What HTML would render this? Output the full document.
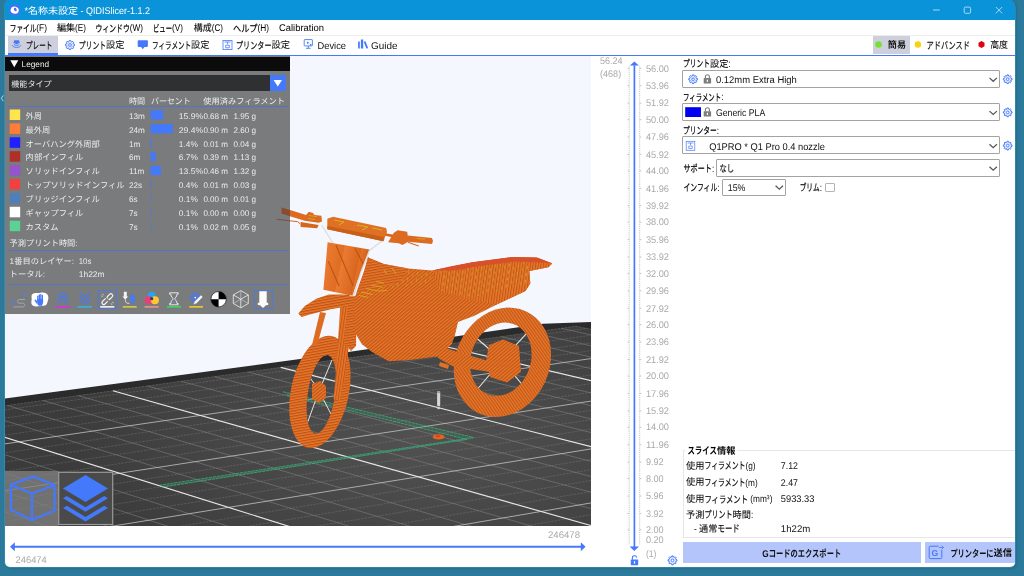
<!DOCTYPE html>
<html lang="ja"><head><meta charset="utf-8"><title>*名称未設定 - QIDISlicer-1.1.2</title>
<style>
html,body{margin:0;padding:0}
body{width:1024px;height:576px;overflow:hidden;background:#2c7a9b;position:relative;font-family:"Liberation Sans","Noto Sans CJK JP",sans-serif;}
.abs{position:absolute}
#win{position:absolute;left:5px;top:0;width:1010.4px;height:566.700px;background:linear-gradient(#0a93d9 0,#0a93d9 19px,#fff 19px);border-radius:5px 7px 5px 5px;overflow:hidden;box-shadow:0 0 0 .5px #3a9acb,1.500px 1px 2.500px .3px rgba(20,60,80,.22)}
#titlebar{position:absolute;left:0;top:0;width:100%;height:20px;background:#0a93d9}
#menubar{position:absolute;left:0;top:20px;width:100%;height:14.5px;background:#fff;border-bottom:1px solid #ececec}
#tabbar{position:absolute;left:0;top:35.5px;width:100%;height:19px;background:#fff;border-bottom:1.3px solid #4479fb}
.seltab{position:absolute;background:#cdd0dc}
#view{position:absolute;left:0;top:56px;width:585.6px;height:470px;background:#f4f7fe;overflow:hidden}
#legend{position:absolute;left:0;top:0;width:285px;height:257.6px;background:#797b7d}
#legend .hd{position:absolute;left:0;top:.6px;width:100%;height:14.2px;background:#0b0b0b}
#legend .cb{position:absolute;left:4px;top:19.3px;width:261px;height:15.7px;background:#2e3031}
#legend .cbb{position:absolute;left:265px;top:19.3px;width:15.6px;height:15.7px;background:#4479fb}
.hl{position:absolute;height:1.100px;background:#5a72bd}
#sb{position:absolute;left:677px;top:56px;width:333px;height:510px;background:#fff}
.combo{position:absolute;border:.9px solid #a3a3a3;background:#fff;box-sizing:border-box;border-radius:1px}
.btn{position:absolute;background:#b4c5fb}
#grp{position:absolute;left:.7px;top:394px;width:340px;height:87.5px;border:1px solid #e6e6e6;box-sizing:border-box}
svg{position:absolute;left:0;top:0;overflow:visible}
#ov{will-change:transform}
text{font-family:"Liberation Sans","Noto Sans CJK JP",sans-serif;white-space:pre;text-rendering:geometricPrecision}
</style></head><body>
<div id="win">
 <div id="titlebar"></div>
 <div id="menubar"></div>
 <div id="tabbar"><div class="seltab" style="left:3px;top:.5px;width:50px;height:17.5px"></div><div class="abs" style="left:3px;top:17.5px;width:50px;height:2.2px;background:#4479fb"></div><div class="seltab" style="left:868px;top:.5px;width:37px;height:17.5px"></div></div>
 <div id="view">
  <svg width="585.6" height="470" viewBox="5 56 585.6 470" style="overflow:hidden">
<defs>
<radialGradient id="bedg" gradientUnits="userSpaceOnUse" cx="420" cy="440" r="360" gradientTransform="translate(420 440) scale(1 .45) translate(-420 -440)"><stop offset="0" stop-color="#515151"/><stop offset=".45" stop-color="#484848"/><stop offset="1" stop-color="#3b3b3b"/></radialGradient>
<pattern id="hat" width="2.6" height="2.6" patternUnits="userSpaceOnUse" patternTransform="rotate(50)"><rect width="2.6" height="2.6" fill="#ea7630"/><rect width="1.2" height="2.6" fill="#bd5711"/></pattern>
<pattern id="hat2" width="2.5" height="2.5" patternUnits="userSpaceOnUse" patternTransform="rotate(-35)"><rect width="2.5" height="2.5" fill="#ea7630"/><rect width="1.15" height="2.5" fill="#bf5912"/></pattern>
<pattern id="hat3" width="2.6" height="2.6" patternUnits="userSpaceOnUse" patternTransform="rotate(80)"><rect width="2.6" height="2.6" fill="#ea7630"/><rect width="1.2" height="2.6" fill="#bb5510"/></pattern>
<pattern id="hat4" width="2.6" height="2.6" patternUnits="userSpaceOnUse" patternTransform="rotate(8)"><rect width="2.6" height="2.6" fill="#e9752e"/><rect width="1.1" height="2.6" fill="#c05a13"/></pattern>
<pattern id="oliv" width="9" height="7" patternUnits="userSpaceOnUse" patternTransform="rotate(8)"><rect x="1" y="1" width=".9" height="3.200" fill="#c9a425"/><rect x="5.500" y="4" width=".9" height="2.600" fill="#c9a425"/></pattern>
</defs>
<polygon points="0,399.2 5,398.500 300,359 543,323.800 591,322 591,330 0,410" fill="#2b2b2b"/>
<polygon points="0,406.2 575.8,326.2 591,328.5 591,530 0,530" fill="#3d3d3d"/>
<polygon points="-291.5,447.2 575.8,326.2 1181.0,457.4 219.7,632.0" fill="url(#bedg)"/>
<path d="M-214.1 436.4L308.0 616.0M-176.1 431.1L351.2 608.1M-138.5 425.8L393.7 600.4M-101.3 420.7L435.7 592.8M-28.3 410.5L517.8 577.9M7.6 405.5L558.0 570.6M43.1 400.5L597.7 563.4M78.2 395.6L636.8 556.3M147.2 386.0L713.4 542.4M181.1 381.3L751.0 535.5M214.7 376.6L788.0 528.8M247.9 372.0L824.6 522.2M313.2 362.8L896.3 509.2M345.3 358.4L931.4 502.8M377.1 353.9L966.1 496.5M408.6 349.5L1000.3 490.3M470.5 340.9L1067.5 478.1M501.0 336.7L1100.4 472.1M531.1 332.5L1133.0 466.2M561.0 328.3L1165.1 460.3" stroke="#858585" stroke-width=".55" fill="none"/>
<path d="M575.8 326.2L1181.0 457.4M-291.5 447.2L575.8 326.2M-283.1 450.2L586.1 328.5M-266.0 456.4L606.9 333.0M-248.6 462.7L628.1 337.6M-230.9 469.1L649.5 342.2M-194.7 482.2L693.3 351.7M-176.2 488.9L715.6 356.5M-157.3 495.7L738.3 361.5M-138.1 502.6L761.3 366.5M-98.8 516.9L808.4 376.7M-78.6 524.2L832.4 381.9M-58.1 531.6L856.8 387.2M-37.2 539.1L881.6 392.5M5.8 554.7L932.3 403.5M27.8 562.6L958.2 409.1M50.3 570.7L984.5 414.8M73.1 579.0L1011.3 420.6M120.2 596.0L1066.1 432.5M144.4 604.8L1094.1 438.6M169.0 613.7L1122.6 444.8M194.1 622.8L1151.6 451.1" stroke="#9a9a9a" stroke-width=".5" stroke-dasharray="2.4 1.1" fill="none" opacity=".55"/>
<path d="M-213.0 475.6L671.2 346.9M-118.6 509.7L784.7 371.5M-15.9 546.8L906.7 398.0M96.4 587.4L1038.5 426.5M219.7 632.0L1181.0 457.4" stroke="#c4c4c4" stroke-width=".8" fill="none"/>
<path d="M-252.6 441.7L264.2 623.9M-64.6 415.5L477.0 585.3M112.9 390.8L675.4 549.3M280.7 367.4L860.7 515.6M439.7 345.2L1034.1 484.1" stroke="#e6e6e6" stroke-width="1.15" fill="none"/>
<path d="M283 391.800L473.500 437.500L159.600 485.200 M287 395.200L467.100 439.400L163 487" stroke="#3bc487" stroke-width=".75" stroke-dasharray="3.200 .7" fill="none" opacity=".9"/>
<path d="M285 393.500L470.300 438.500L161 486.100" stroke="#2a8f64" stroke-width="1.600" fill="none" opacity=".35"/>
<g id="bike"><path d="M502 360L474 336M502 360L529 331M502 360L475 392M502 360L525 388" stroke="#e4e4e4" stroke-width="1.100" fill="none"/>
<path d="M545.1 381.9L541.7 388.4L537.6 394.4L532.9 399.9L527.7 404.8L522.1 408.9L516.1 412.3L509.9 414.8L503.5 416.3L497.1 417.0L490.9 416.7L484.8 415.5L479.0 413.4L473.6 410.4L468.7 406.6L464.4 402.0L460.8 396.8L457.8 390.9L455.6 384.6L454.3 377.9L453.7 370.9L454.0 363.8L455.1 356.6L457.0 349.6L459.7 342.7L463.1 336.2L467.2 330.2L471.9 324.7L477.1 319.8L482.7 315.7L488.7 312.3L494.9 309.8L501.3 308.3L507.7 307.6L513.9 307.9L520.0 309.1L525.8 311.2L531.2 314.2L536.1 318.0L540.4 322.6L544.0 327.8L547.0 333.7L549.2 340.0L550.5 346.7L551.1 353.7L550.8 360.8L549.7 368.0L547.8 375.0ZM529.0 369.1L527.1 373.7L524.8 377.9L522.1 381.9L519.0 385.4L515.6 388.6L512.0 391.2L508.1 393.2L504.1 394.7L500.1 395.6L496.1 395.8L492.2 395.5L488.4 394.5L484.8 392.9L481.5 390.7L478.5 388.0L475.9 384.8L473.8 381.1L472.1 377.1L470.9 372.8L470.2 368.2L470.0 363.5L470.3 358.7L471.2 354.0L472.6 349.3L474.5 344.7L476.8 340.5L479.5 336.5L482.6 333.0L486.0 329.8L489.6 327.2L493.5 325.2L497.5 323.7L501.5 322.8L505.5 322.6L509.4 322.9L513.2 323.9L516.8 325.5L520.1 327.7L523.1 330.4L525.7 333.6L527.8 337.3L529.5 341.3L530.7 345.6L531.4 350.2L531.6 354.9L531.3 359.7L530.4 364.4Z" fill="url(#hat2)" fill-rule="evenodd"/>
<polygon points="489.0,345.0 503.0,339.5 519.0,346.0 521.0,372.0 507.0,382.5 490.0,377.0 486.0,361.0" fill="url(#hat)"/>
<polygon points="440.0,346.0 458.0,352.0 492.0,362.0 490.0,372.0 452.0,366.0 438.0,358.0" fill="url(#hat)"/>
<polygon points="440.0,362.0 449.0,365.0 448.0,369.0 439.0,366.0" fill="#e27128"/>
<path d="M319 391L332 360M319 391L309 376M319 391L307 424M319 391L331 414" stroke="#e4e4e4" stroke-width="1" fill="none"/>
<path d="M348.2 398.0L346.4 405.2L344.1 412.2L341.4 418.9L338.4 425.1L335.0 430.7L331.4 435.7L327.6 439.9L323.7 443.3L319.7 445.8L315.7 447.4L311.7 448.0L307.9 447.7L304.3 446.5L301.0 444.3L298.0 441.2L295.4 437.2L293.2 432.5L291.5 427.1L290.2 421.1L289.4 414.6L289.2 407.7L289.5 400.5L290.3 393.2L291.6 385.8L293.4 378.6L295.7 371.6L298.4 364.9L301.4 358.7L304.8 353.1L308.4 348.1L312.2 343.9L316.1 340.5L320.1 338.0L324.1 336.4L328.1 335.8L331.9 336.1L335.5 337.3L338.8 339.5L341.8 342.6L344.4 346.6L346.6 351.3L348.3 356.7L349.6 362.7L350.4 369.2L350.6 376.1L350.3 383.3L349.5 390.6ZM334.8 396.4L333.9 401.5L332.8 406.5L331.5 411.3L330.0 415.7L328.3 419.8L326.6 423.5L324.7 426.7L322.8 429.3L320.9 431.3L318.9 432.7L317.1 433.5L315.3 433.5L313.6 432.9L312.0 431.6L310.6 429.7L309.4 427.2L308.3 424.1L307.6 420.5L307.0 416.5L306.7 412.1L306.6 407.4L306.8 402.4L307.3 397.3L308.0 392.2L308.9 387.1L310.0 382.1L311.3 377.3L312.8 372.9L314.5 368.8L316.2 365.1L318.1 361.9L320.0 359.3L321.9 357.3L323.9 355.9L325.7 355.1L327.5 355.1L329.2 355.7L330.8 357.0L332.2 358.9L333.4 361.4L334.5 364.5L335.2 368.1L335.8 372.1L336.1 376.5L336.2 381.2L336.0 386.2L335.5 391.3Z" fill="url(#hat3)" fill-rule="evenodd"/>
<polygon points="312.0,384.0 320.0,381.0 326.0,386.0 326.0,398.0 319.0,403.0 312.0,399.0" fill="url(#hat)"/>
<polygon points="341.0,296.0 353.0,296.5 349.6,340.0 345.0,378.0 339.5,401.0 333.5,399.0 336.0,372.0 338.0,340.0" fill="url(#hat4)"/>
<polygon points="320.0,312.0 326.0,313.0 317.0,346.0 312.0,345.0" fill="#dd6c22"/>
<polygon points="298.3,313.5 304.8,306.0 316.3,298.8 328.8,294.6 349.7,294.6 348.5,306.0 330.8,309.2 322.5,311.3 310.0,314.5 301.5,317.0" fill="url(#hat3)"/>
<polygon points="349.0,296.5 357.0,296.0 356.0,346.0 351.0,351.0 343.5,342.0" fill="url(#hat3)"/>
<polygon points="369.2,258.0 383.8,264.0 408.0,268.5 432.4,270.5 450.0,267.0 472.0,262.5 512.1,257.3 537.0,257.7 552.2,263.4 548.4,267.2 529.3,271.0 530.3,283.5 525.5,291.0 496.8,304.5 473.9,316.0 458.0,322.0 455.0,335.0 451.8,344.2 437.2,356.4 410.0,360.0 388.6,361.3 372.0,352.0 361.9,344.2 354.6,332.0 354.6,303.0 355.0,297.0 359.0,285.0 364.0,271.5 368.0,256.5" fill="url(#hat)"/>
<polygon points="432.4,270.5 450.0,267.0 472.0,262.5 512.1,257.3 537.0,257.7 552.2,263.4 548.4,267.2 529.3,271.0 530.3,283.5 525.5,291.0 496.8,304.5 470.0,300.0 440.0,292.0" fill="url(#hat4)"/>
<polygon points="440.0,268.0 530.0,262.0 528.0,284.0 470.0,298.0 440.0,290.0" fill="url(#oliv)"/>
<polygon points="372.0,262.0 432.0,272.0 430.0,284.0 372.0,290.0" fill="url(#oliv)" opacity=".8"/>
<polygon points="432.4,270.5 450.0,266.5 472.0,262.3 512.1,257.1 537.0,257.5 552.2,263.2 540.0,262.5 515.0,261.5 480.0,266.0 455.0,270.5" fill="#d8502a"/>
<polygon points="369.2,258.0 383.8,264.0 408.0,268.5 400.0,282.0 372.0,290.0 357.0,292.0 364.0,271.5" fill="url(#hat3)" opacity=".9"/>
<linearGradient id="plg" x1="0" y1="0" x2="1" y2=".25"><stop offset="0" stop-color="#ee7c33"/><stop offset=".45" stop-color="#e06d24"/><stop offset=".46" stop-color="#ec7a31"/><stop offset=".8" stop-color="#d9661f"/><stop offset=".81" stop-color="#e47128"/><stop offset="1" stop-color="#cf5f1a"/></linearGradient>
<polygon points="327.6,242.3 369.5,249.6 363.4,265.4 357.0,282.0 352.5,295.7 323.4,289.7" fill="url(#plg)"/>
<path d="M336.100 245.300L353.100 286 M355 248.400L363.400 264.200 M328.200 261.100L339.100 286" stroke="#b9540f" stroke-width="1.100" fill="none"/>
<path d="M321.600 225 L333 243 M384.700 239 L369.500 250.500 L361 272 L353.700 295.700" stroke="#dcdcdc" stroke-width="1.300" fill="none"/>
<path d="M376 281.500l8 1.600M371 285l12 2.400M366 288.500l13 2.600l8-.8M361 292l12 2.600M359 295.500l9 1.800M384 270l3 4M392 268l4 6" stroke="#d9b01f" stroke-width=".8" fill="none"/>
<polygon points="290.0,210.0 306.1,215.1 308.9,211.7 313.0,213.0 314.4,215.1 321.4,215.8 322.0,221.4 318.6,222.8 304.7,220.7 290.0,216.3" fill="#dc6b21"/>
<polygon points="300.6,222.1 318.6,224.9 317.2,228.3 300.6,226.9" fill="#d5661e"/>
<path d="M290 220.8L297.800 221.700L300.600 224.200" stroke="#d5661e" stroke-width="1" fill="none"/>
<path d="M309 215.500l8 1.200M308 218.500l7 1" stroke="#d8b020" stroke-width=".8" fill="none"/>
<polygon points="327.3,218.7 333.1,216.8 386.2,227.9 387.0,232.0 383.4,241.3 327.3,229.2" fill="#e07026"/>
<polygon points="327.3,226.0 383.8,237.0 383.4,241.3 327.3,229.2" fill="#c65f18"/>
<path d="M334 220 L344 222 L339 225 M357 225 L368 227 L362 230 M372 228 L382 230" stroke="#d8b020" stroke-width="1" fill="none"/>
<path d="M385.300 234.500L395 236.400" stroke="#d5661e" stroke-width="2.600"/>
<polygon points="393.9,232.7 397.7,230.3 407.2,231.7 407.7,235.5 432.0,238.0 433.0,241.0 432.0,244.1 408.2,241.8 402.5,245.1 398.6,243.2 388.1,242.2" fill="#dc6b21"/>
<path d="M408 242.200L418.700 246" stroke="#d5661e" stroke-width="1.100"/><path d="M417 238.500l8 .6" stroke="#d8b020" stroke-width=".8"/></g>
<rect x="437.100" y="391" width="3.100" height="15.200" rx="1" fill="#d6d6d6"/><rect x="437.100" y="391" width="3.100" height="2.200" rx="1" fill="#9c9c9c"/><rect x="437.300" y="407.300" width="2.700" height="1.800" fill="#cfcfcf"/>
<ellipse cx="438.600" cy="436.900" rx="6" ry="2.700" fill="#e0661f"/><ellipse cx="438" cy="436.200" rx="2.200" ry="1" fill="#e03a25"/>
</svg>
  <div id="legend"><div class="hd"></div><div class="cb"></div><div class="cbb"></div>
   <div class="hl" style="left:2.500px;top:50.200px;width:280.500px"></div>
   <div class="hl" style="left:2.500px;top:193.600px;width:280.500px"></div>
   <div class="hl" style="left:2.500px;top:228.400px;width:280.500px"></div>
  </div>
 </div>
 <div id="sb">
  <div class="combo" style="left:.3px;top:14.100px;width:317.500px;height:17.900px"></div>
  <div class="combo" style="left:.3px;top:47.300px;width:317.500px;height:17.900px"></div>
  <div class="combo" style="left:.3px;top:80.400px;width:317.500px;height:17.900px"></div>
  <div class="combo" style="left:34.3px;top:103.4px;width:283.5px;height:17.2px"></div>
  <div class="combo" style="left:40px;top:122.5px;width:63.6px;height:17.2px"></div>
  <div class="combo" style="left:143.4px;top:126.8px;width:9.2px;height:9.2px;border-color:#b5b5b5"></div>
  <div id="grp"></div>
  <div class="btn" style="left:.6px;top:486.3px;width:238.5px;height:20.4px"></div>
  <div class="btn" style="left:243.2px;top:486.3px;width:91px;height:20.4px"></div>
 </div>
</div>
<svg id="ov" width="1024" height="576" viewBox="0 0 1024 576">
<rect x="9.800" y="5.100" width="9.800" height="9.800" rx="1.800" fill="#4b6df5"/><ellipse cx="14.700" cy="10.200" rx="4.100" ry="3.500" fill="#fff" transform="rotate(15 14.700 10.200)"/><ellipse cx="15.300" cy="9.500" rx="1.300" ry="1.900" fill="#4b6df5" transform="rotate(-25 15.300 9.500)"/>
<text fill="#fff"><tspan x="24.4" y="14.0" font-size="9.8" textLength="3.5" lengthAdjust="spacingAndGlyphs">*</tspan><tspan x="27.9" y="13.9" font-size="9.4" textLength="50.1" lengthAdjust="spacingAndGlyphs">名称未設定</tspan><tspan x="78.0" y="14.0" font-size="9.8" textLength="72.0" lengthAdjust="spacingAndGlyphs"> - QIDISlicer-1.1.2</tspan></text>
<g stroke="#cfeafa" stroke-width=".8" fill="none"><path d="M933 10H939.8"/><rect x="964.2" y="7.1" width="6.4" height="6.2" rx="1.2"/><path d="M995.8 7L1002.2 13.4M1002.2 7L995.8 13.4"/></g>
<text fill="#000"><tspan x="9.8" y="31.7" font-size="9.8" textLength="26.6" lengthAdjust="spacingAndGlyphs" stroke="#000" stroke-width="0.2">ファイル</tspan><tspan x="36.3" y="31.4" font-size="9.8" textLength="10.6" lengthAdjust="spacingAndGlyphs">(F)</tspan></text>
<text fill="#000"><tspan x="56.9" y="31.3" font-size="9.4" textLength="18.2" lengthAdjust="spacingAndGlyphs" stroke="#000" stroke-width="0.08">編集</tspan><tspan x="75.1" y="31.4" font-size="9.8" textLength="10.9" lengthAdjust="spacingAndGlyphs">(E)</tspan></text>
<text fill="#000"><tspan x="95.6" y="31.7" font-size="9.8" textLength="34.1" lengthAdjust="spacingAndGlyphs" stroke="#000" stroke-width="0.2">ウィンドウ</tspan><tspan x="129.7" y="31.4" font-size="9.8" textLength="13.3" lengthAdjust="spacingAndGlyphs">(W)</tspan></text>
<text fill="#000"><tspan x="153.0" y="31.7" font-size="9.8" textLength="19.0" lengthAdjust="spacingAndGlyphs" stroke="#000" stroke-width="0.2">ビュー</tspan><tspan x="172.0" y="31.4" font-size="9.8" textLength="11.0" lengthAdjust="spacingAndGlyphs">(V)</tspan></text>
<text fill="#000"><tspan x="193.8" y="31.3" font-size="9.4" textLength="18.0" lengthAdjust="spacingAndGlyphs" stroke="#000" stroke-width="0.08">構成</tspan><tspan x="211.8" y="31.4" font-size="9.8" textLength="11.2" lengthAdjust="spacingAndGlyphs">(C)</tspan></text>
<text fill="#000"><tspan x="233.0" y="31.7" font-size="9.8" textLength="24.5" lengthAdjust="spacingAndGlyphs" stroke="#000" stroke-width="0.2">ヘルプ</tspan><tspan x="257.5" y="31.4" font-size="9.8" textLength="11.5" lengthAdjust="spacingAndGlyphs">(H)</tspan></text>
<text fill="#000"><tspan x="279.0" y="31.4" font-size="9.8" textLength="45.0" lengthAdjust="spacingAndGlyphs">Calibration</tspan></text>
<text fill="#111"><tspan x="26.0" y="48.8" font-size="9.8" textLength="26.3" lengthAdjust="spacingAndGlyphs" stroke="#111" stroke-width="0.2">プレート</tspan></text>
<text fill="#111"><tspan x="78.8" y="48.8" font-size="9.8" textLength="27.3" lengthAdjust="spacingAndGlyphs" stroke="#111" stroke-width="0.2">プリント</tspan><tspan x="106.1" y="48.4" font-size="9.4" textLength="18.4" lengthAdjust="spacingAndGlyphs" stroke="#111" stroke-width="0.08">設定</tspan></text>
<text fill="#111"><tspan x="152.0" y="48.8" font-size="9.8" textLength="39.1" lengthAdjust="spacingAndGlyphs" stroke="#111" stroke-width="0.2">フィラメント</tspan><tspan x="191.1" y="48.4" font-size="9.4" textLength="18.4" lengthAdjust="spacingAndGlyphs" stroke="#111" stroke-width="0.08">設定</tspan></text>
<text fill="#111"><tspan x="236.0" y="48.8" font-size="9.8" textLength="35.6" lengthAdjust="spacingAndGlyphs" stroke="#111" stroke-width="0.2">プリンター</tspan><tspan x="271.6" y="48.4" font-size="9.4" textLength="18.4" lengthAdjust="spacingAndGlyphs" stroke="#111" stroke-width="0.08">設定</tspan></text>
<text fill="#111"><tspan x="317.5" y="48.5" font-size="9.8" textLength="28.5" lengthAdjust="spacingAndGlyphs">Device</tspan></text>
<text fill="#111"><tspan x="371.0" y="48.5" font-size="9.8" textLength="26.5" lengthAdjust="spacingAndGlyphs">Guide</tspan></text>
<g fill="none" stroke="#4479fb" stroke-width=".9"><path d="M12.2 45.2c1 3 7.8 3 8.8 0"/><path d="M13.8 44.2c1 1.6 4.6 1.6 5.6 0"/></g><path d="M14.3 40.2h4.6l.9 2.6-3.2 1.5-3.2-1.5z" fill="#4479fb"/>
<path d="M73.47 44.08L74.55 44.31L74.55 45.69L73.47 45.92L73.10 46.80L73.70 47.73L72.73 48.70L71.80 48.10L70.92 48.47L70.69 49.55L69.31 49.55L69.08 48.47L68.20 48.10L67.27 48.70L66.30 47.73L66.90 46.80L66.53 45.92L65.45 45.69L65.45 44.31L66.53 44.08L66.90 43.20L66.30 42.27L67.27 41.30L68.20 41.90L69.08 41.53L69.31 40.45L70.69 40.45L70.92 41.53L71.80 41.90L72.73 41.30L73.70 42.27L73.10 43.20Z" fill="#4479fb" fill-opacity=".18" stroke="#4479fb" stroke-width="1.0" stroke-linejoin="round"/><circle cx="70" cy="45" r="1.38" fill="#fff" stroke="#4479fb" stroke-width="0.90"/>
<path d="M138.5 40.3h8.6a.8 .8 0 0 1 .8 .8v5a.8 .8 0 0 1 -.8 .8h-2.6l-1.7 2.3-1.7-2.3h-2.6a.8 .8 0 0 1 -.8-.8v-5a.8 .8 0 0 1 .8-.8z" fill="#4479fb"/>
<g fill="none" stroke="#4479fb" stroke-width=".8"><rect x="223" y="40.4" width="9" height="9.2"/><path d="M224.5 42h6M227.5 42v2.2M225.7 47.8v-2.6h3.6v2.6z"/></g>
<g fill="none" stroke="#4479fb" stroke-width=".9"><rect x="304.2" y="39.600" width="8.200" height="6.300" rx=".5"/><path d="M306 48.300h4.600M308.300 46v2.200"/></g><circle cx="307.800" cy="42.700" r="1" fill="#4479fb"/><path d="M309.600 43.600l2.600 1.300-1.100 .4-.4 1.100z" fill="#4479fb"/>
<g fill="#4479fb"><rect x="358.100" y="41.500" width="1.700" height="7"/><rect x="360.900" y="39.500" width="2.300" height="9"/><path d="M363.800 41.700l1.700-.5 2.700 7-1.900 .4z"/></g>
<circle cx="878.5" cy="44.5" r="3.3" fill="#76e033"/>
<text fill="#111" font-weight="bold"><tspan x="887.8" y="48.1" font-size="9.4" textLength="18.2" lengthAdjust="spacingAndGlyphs">簡易</tspan></text>
<circle cx="917.9" cy="44.5" r="3.2" fill="#f8d410"/>
<text fill="#111"><tspan x="926.5" y="48.5" font-size="9.8" textLength="43.5" lengthAdjust="spacingAndGlyphs" stroke="#111" stroke-width="0.2">アドバンスド</tspan></text>
<polygon points="981.5,41 984.5,42.7 984.5,46.3 981.5,48 978.5,46.3 978.5,42.7" fill="#e3000f"/>
<text fill="#111"><tspan x="990.2" y="48.1" font-size="9.4" textLength="17.8" lengthAdjust="spacingAndGlyphs" stroke="#111" stroke-width="0.08">高度</tspan></text>
<polygon points="10.3,60.2 18.3,60.2 14.3,67.3" fill="#fff"/>
<text x="21.6" y="67.2" font-size="8.3" fill="#ececec" textLength="27.5" lengthAdjust="spacingAndGlyphs">Legend</text>
<text x="11.3" y="86.8" font-size="8.2" fill="#ececec" textLength="40.3" lengthAdjust="spacingAndGlyphs">機能タイプ</text>
<polygon points="273.6,80 282,80 277.8,86.6" fill="#fff"/>
<text x="129.0" y="103.8" font-size="8.2" fill="#ececec" textLength="16.2" lengthAdjust="spacingAndGlyphs">時間</text>
<text x="151.0" y="103.8" font-size="8.2" fill="#ececec" textLength="39.8" lengthAdjust="spacingAndGlyphs">パーセント</text>
<text x="203.3" y="103.8" font-size="8.2" fill="#ececec" textLength="81.7" lengthAdjust="spacingAndGlyphs">使用済みフィラメント</text>
<rect x="9.7" y="109.5" width="10.5" height="10.5" fill="#ffe54d"/>
<text x="25.6" y="118.7" font-size="8.2" fill="#ececec" textLength="16.5" lengthAdjust="spacingAndGlyphs">外周</text>
<text x="129.0" y="118.7" font-size="8.2" fill="#ececec">13m</text>
<rect x="150.6" y="110.2" width="12.4" height="9.3" fill="#4479fb"/>
<text x="178.8" y="118.7" font-size="8.2" fill="#ececec" textLength="24.4" lengthAdjust="spacingAndGlyphs">15.9%</text>
<text x="203.4" y="118.7" font-size="8.2" fill="#ececec" textLength="24.6" lengthAdjust="spacingAndGlyphs">0.68 m</text>
<text x="233.4" y="118.7" font-size="8.2" fill="#ececec" textLength="22.6" lengthAdjust="spacingAndGlyphs">1.95 g</text>
<rect x="9.7" y="123.4" width="10.5" height="10.5" fill="#ff7d38"/>
<text x="25.6" y="132.6" font-size="8.2" fill="#ececec" textLength="24.8" lengthAdjust="spacingAndGlyphs">最外周</text>
<text x="129.0" y="132.6" font-size="8.2" fill="#ececec">24m</text>
<rect x="150.6" y="124.1" width="22.2" height="9.3" fill="#4479fb"/>
<text x="178.8" y="132.6" font-size="8.2" fill="#ececec" textLength="24.4" lengthAdjust="spacingAndGlyphs">29.4%</text>
<text x="203.4" y="132.6" font-size="8.2" fill="#ececec" textLength="24.6" lengthAdjust="spacingAndGlyphs">0.90 m</text>
<text x="233.4" y="132.6" font-size="8.2" fill="#ececec" textLength="22.6" lengthAdjust="spacingAndGlyphs">2.60 g</text>
<rect x="9.7" y="137.3" width="10.5" height="10.5" fill="#1f1fff"/>
<text x="25.6" y="146.5" font-size="8.2" fill="#ececec" textLength="74.2" lengthAdjust="spacingAndGlyphs">オーバハング外周部</text>
<text x="129.0" y="146.5" font-size="8.2" fill="#ececec">1m</text>
<rect x="150.6" y="138.0" width="1.1" height="9.3" fill="#4479fb"/>
<text x="178.8" y="146.5" font-size="8.2" fill="#ececec" textLength="19.0" lengthAdjust="spacingAndGlyphs">1.4%</text>
<text x="203.4" y="146.5" font-size="8.2" fill="#ececec" textLength="24.6" lengthAdjust="spacingAndGlyphs">0.01 m</text>
<text x="233.4" y="146.5" font-size="8.2" fill="#ececec" textLength="22.6" lengthAdjust="spacingAndGlyphs">0.04 g</text>
<rect x="9.7" y="151.2" width="10.5" height="10.5" fill="#b03029"/>
<text x="25.6" y="160.4" font-size="8.2" fill="#ececec" textLength="57.8" lengthAdjust="spacingAndGlyphs">内部インフィル</text>
<text x="129.0" y="160.4" font-size="8.2" fill="#ececec">6m</text>
<rect x="150.6" y="151.9" width="5.1" height="9.3" fill="#4479fb"/>
<text x="178.8" y="160.4" font-size="8.2" fill="#ececec" textLength="19.0" lengthAdjust="spacingAndGlyphs">6.7%</text>
<text x="203.4" y="160.4" font-size="8.2" fill="#ececec" textLength="24.6" lengthAdjust="spacingAndGlyphs">0.39 m</text>
<text x="233.4" y="160.4" font-size="8.2" fill="#ececec" textLength="22.6" lengthAdjust="spacingAndGlyphs">1.13 g</text>
<rect x="9.7" y="165.1" width="10.5" height="10.5" fill="#9654cc"/>
<text x="25.6" y="174.3" font-size="8.2" fill="#ececec" textLength="74.2" lengthAdjust="spacingAndGlyphs">ソリッドインフィル</text>
<text x="129.0" y="174.3" font-size="8.2" fill="#ececec">11m</text>
<rect x="150.6" y="165.8" width="10.3" height="9.3" fill="#4479fb"/>
<text x="178.8" y="174.3" font-size="8.2" fill="#ececec" textLength="24.4" lengthAdjust="spacingAndGlyphs">13.5%</text>
<text x="203.4" y="174.3" font-size="8.2" fill="#ececec" textLength="24.6" lengthAdjust="spacingAndGlyphs">0.46 m</text>
<text x="233.4" y="174.3" font-size="8.2" fill="#ececec" textLength="22.6" lengthAdjust="spacingAndGlyphs">1.32 g</text>
<rect x="9.7" y="179.0" width="10.5" height="10.5" fill="#f04040"/>
<text x="25.6" y="188.2" font-size="8.2" fill="#ececec" textLength="99.0" lengthAdjust="spacingAndGlyphs">トップソリッドインフィル</text>
<text x="129.0" y="188.2" font-size="8.2" fill="#ececec">22s</text>
<rect x="150.6" y="179.7" width="0.6" height="9.3" fill="#4479fb"/>
<text x="178.8" y="188.2" font-size="8.2" fill="#ececec" textLength="19.0" lengthAdjust="spacingAndGlyphs">0.4%</text>
<text x="203.4" y="188.2" font-size="8.2" fill="#ececec" textLength="24.6" lengthAdjust="spacingAndGlyphs">0.01 m</text>
<text x="233.4" y="188.2" font-size="8.2" fill="#ececec" textLength="22.6" lengthAdjust="spacingAndGlyphs">0.03 g</text>
<rect x="9.7" y="192.9" width="10.5" height="10.5" fill="#4d80ba"/>
<text x="25.6" y="202.1" font-size="8.2" fill="#ececec" textLength="74.2" lengthAdjust="spacingAndGlyphs">ブリッジインフィル</text>
<text x="129.0" y="202.1" font-size="8.2" fill="#ececec">6s</text>
<rect x="150.6" y="193.6" width="0.5" height="9.3" fill="#4479fb"/>
<text x="178.8" y="202.1" font-size="8.2" fill="#ececec" textLength="19.0" lengthAdjust="spacingAndGlyphs">0.1%</text>
<text x="203.4" y="202.1" font-size="8.2" fill="#ececec" textLength="24.6" lengthAdjust="spacingAndGlyphs">0.00 m</text>
<text x="233.4" y="202.1" font-size="8.2" fill="#ececec" textLength="22.6" lengthAdjust="spacingAndGlyphs">0.01 g</text>
<rect x="9.7" y="206.8" width="10.5" height="10.5" fill="#ffffff"/>
<text x="25.6" y="216.0" font-size="8.2" fill="#ececec" textLength="57.8" lengthAdjust="spacingAndGlyphs">ギャップフィル</text>
<text x="129.0" y="216.0" font-size="8.2" fill="#ececec">7s</text>
<rect x="150.6" y="207.5" width="0.5" height="9.3" fill="#4479fb"/>
<text x="178.8" y="216.0" font-size="8.2" fill="#ececec" textLength="19.0" lengthAdjust="spacingAndGlyphs">0.1%</text>
<text x="203.4" y="216.0" font-size="8.2" fill="#ececec" textLength="24.6" lengthAdjust="spacingAndGlyphs">0.00 m</text>
<text x="233.4" y="216.0" font-size="8.2" fill="#ececec" textLength="22.6" lengthAdjust="spacingAndGlyphs">0.00 g</text>
<rect x="9.7" y="220.7" width="10.5" height="10.5" fill="#5cd194"/>
<text x="25.6" y="229.9" font-size="8.2" fill="#ececec" textLength="33.0" lengthAdjust="spacingAndGlyphs">カスタム</text>
<text x="129.0" y="229.9" font-size="8.2" fill="#ececec">7s</text>
<rect x="150.6" y="221.4" width="0.5" height="9.3" fill="#4479fb"/>
<text x="178.8" y="229.9" font-size="8.2" fill="#ececec" textLength="19.0" lengthAdjust="spacingAndGlyphs">0.1%</text>
<text x="203.4" y="229.9" font-size="8.2" fill="#ececec" textLength="24.6" lengthAdjust="spacingAndGlyphs">0.02 m</text>
<text x="233.4" y="229.9" font-size="8.2" fill="#ececec" textLength="22.6" lengthAdjust="spacingAndGlyphs">0.05 g</text>
<text x="9.6" y="245.7" font-size="8.2" fill="#ececec" textLength="68.0" lengthAdjust="spacingAndGlyphs">予測プリント時間:</text>
<text x="9.6" y="263.7" font-size="8.2" fill="#ececec" textLength="64.5" lengthAdjust="spacingAndGlyphs">1番目のレイヤー:</text>
<text x="78.7" y="263.7" font-size="8.2" fill="#ececec" textLength="12.6" lengthAdjust="spacingAndGlyphs">10s</text>
<text x="9.6" y="277.4" font-size="8.2" fill="#ececec" textLength="35.5" lengthAdjust="spacingAndGlyphs">トータル:</text>
<text x="78.7" y="277.4" font-size="8.2" fill="#ececec" textLength="26.0" lengthAdjust="spacingAndGlyphs">1h22m</text>
<text fill="#000"><tspan x="683.0" y="67.1" font-size="9.8" textLength="27.0" lengthAdjust="spacingAndGlyphs" stroke="#000" stroke-width="0.2">プリント</tspan><tspan x="710.0" y="66.7" font-size="9.4" textLength="18.4" lengthAdjust="spacingAndGlyphs" stroke="#000" stroke-width="0.08">設定</tspan><tspan x="728.4" y="66.8" font-size="9.8" textLength="2.3" lengthAdjust="spacingAndGlyphs">:</tspan></text>
<text fill="#000"><tspan x="683.0" y="100.5" font-size="9.8" textLength="38.2" lengthAdjust="spacingAndGlyphs" stroke="#000" stroke-width="0.2">フィラメント</tspan><tspan x="721.2" y="100.2" font-size="9.8" textLength="2.3" lengthAdjust="spacingAndGlyphs">:</tspan></text>
<text fill="#000"><tspan x="683.0" y="133.8" font-size="9.8" textLength="33.7" lengthAdjust="spacingAndGlyphs" stroke="#000" stroke-width="0.2">プリンター</tspan><tspan x="716.7" y="133.5" font-size="9.8" textLength="2.3" lengthAdjust="spacingAndGlyphs">:</tspan></text>
<path d="M696.42 78.32L697.45 78.54L697.45 79.86L696.42 80.08L696.07 80.92L696.64 81.81L695.71 82.74L694.82 82.17L693.98 82.52L693.76 83.55L692.44 83.55L692.22 82.52L691.38 82.17L690.49 82.74L689.56 81.81L690.13 80.92L689.78 80.08L688.75 79.86L688.75 78.54L689.78 78.32L690.13 77.48L689.56 76.59L690.49 75.66L691.38 76.23L692.22 75.88L692.44 74.85L693.76 74.85L693.98 75.88L694.82 76.23L695.71 75.66L696.64 76.59L696.07 77.48Z" fill="#4479fb" fill-opacity=".18" stroke="#4479fb" stroke-width="1.0" stroke-linejoin="round"/><circle cx="693.1" cy="79.2" r="1.32" fill="#fff" stroke="#4479fb" stroke-width="0.90"/>
<rect x="703.7" y="78.1" width="7.4" height="5.4" rx=".6" fill="#7d7d7d"/><path d="M705.4000000000001 78.3 V76.7 a2 2 0 0 1 4 0 V78.3" fill="none" stroke="#7d7d7d" stroke-width="1.1"/><rect x="706.8000000000001" y="79.7" width="1.2" height="2.2" fill="#fff"/>
<text fill="#111"><tspan x="716.0" y="83.2" font-size="9.8" textLength="80.8" lengthAdjust="spacingAndGlyphs">0.12mm Extra High</tspan></text>
<rect x="685.2" y="107.2" width="15.8" height="9.8" fill="#0000f2"/>
<rect x="703.7" y="111.2" width="7.4" height="5.4" rx=".6" fill="#7d7d7d"/><path d="M705.4000000000001 111.4 V109.80000000000001 a2 2 0 0 1 4 0 V111.4" fill="none" stroke="#7d7d7d" stroke-width="1.1"/><rect x="706.8000000000001" y="112.80000000000001" width="1.2" height="2.2" fill="#fff"/>
<text fill="#111"><tspan x="716.0" y="116.3" font-size="9.8" textLength="49.2" lengthAdjust="spacingAndGlyphs">Generic PLA</tspan></text>
<g fill="none" stroke="#4479fb" stroke-width=".7"><rect x="686.2" y="141.3" width="8.6" height="9"/><path d="M687.6 143h5.8M690.5 143v2M688.8 148.6v-2.6h3.4v2.6z"/></g>
<text fill="#111"><tspan x="709.2" y="149.5" font-size="9.8" textLength="115.7" lengthAdjust="spacingAndGlyphs">Q1PRO * Q1 Pro 0.4 nozzle</tspan></text>
<path d="M989.5 77.9 L993.2 81.30000000000001 L996.9000000000001 77.9" fill="none" stroke="#555" stroke-width="1.250"/>
<path d="M1011.02 78.32L1012.05 78.54L1012.05 79.86L1011.02 80.08L1010.67 80.92L1011.24 81.81L1010.31 82.74L1009.42 82.17L1008.58 82.52L1008.36 83.55L1007.04 83.55L1006.82 82.52L1005.98 82.17L1005.09 82.74L1004.16 81.81L1004.73 80.92L1004.38 80.08L1003.35 79.86L1003.35 78.54L1004.38 78.32L1004.73 77.48L1004.16 76.59L1005.09 75.66L1005.98 76.23L1006.82 75.88L1007.04 74.85L1008.36 74.85L1008.58 75.88L1009.42 76.23L1010.31 75.66L1011.24 76.59L1010.67 77.48Z" fill="#4479fb" fill-opacity=".18" stroke="#4479fb" stroke-width="1.0" stroke-linejoin="round"/><circle cx="1007.7" cy="79.2" r="1.32" fill="#fff" stroke="#4479fb" stroke-width="0.90"/>
<path d="M989.5 111.10000000000001 L993.2 114.50000000000001 L996.9000000000001 111.10000000000001" fill="none" stroke="#555" stroke-width="1.250"/>
<path d="M1011.02 111.52L1012.05 111.74L1012.05 113.06L1011.02 113.28L1010.67 114.12L1011.24 115.01L1010.31 115.94L1009.42 115.37L1008.58 115.72L1008.36 116.75L1007.04 116.75L1006.82 115.72L1005.98 115.37L1005.09 115.94L1004.16 115.01L1004.73 114.12L1004.38 113.28L1003.35 113.06L1003.35 111.74L1004.38 111.52L1004.73 110.68L1004.16 109.79L1005.09 108.86L1005.98 109.43L1006.82 109.08L1007.04 108.05L1008.36 108.05L1008.58 109.08L1009.42 109.43L1010.31 108.86L1011.24 109.79L1010.67 110.68Z" fill="#4479fb" fill-opacity=".18" stroke="#4479fb" stroke-width="1.0" stroke-linejoin="round"/><circle cx="1007.7" cy="112.4" r="1.32" fill="#fff" stroke="#4479fb" stroke-width="0.90"/>
<path d="M989.5 144.3 L993.2 147.7 L996.9000000000001 144.3" fill="none" stroke="#555" stroke-width="1.250"/>
<path d="M1011.02 144.72L1012.05 144.94L1012.05 146.26L1011.02 146.48L1010.67 147.32L1011.24 148.21L1010.31 149.14L1009.42 148.57L1008.58 148.92L1008.36 149.95L1007.04 149.95L1006.82 148.92L1005.98 148.57L1005.09 149.14L1004.16 148.21L1004.73 147.32L1004.38 146.48L1003.35 146.26L1003.35 144.94L1004.38 144.72L1004.73 143.88L1004.16 142.99L1005.09 142.06L1005.98 142.63L1006.82 142.28L1007.04 141.25L1008.36 141.25L1008.58 142.28L1009.42 142.63L1010.31 142.06L1011.24 142.99L1010.67 143.88Z" fill="#4479fb" fill-opacity=".18" stroke="#4479fb" stroke-width="1.0" stroke-linejoin="round"/><circle cx="1007.7" cy="145.6" r="1.32" fill="#fff" stroke="#4479fb" stroke-width="0.90"/>
<text fill="#000"><tspan x="683.5" y="172.3" font-size="9.8" textLength="28.4" lengthAdjust="spacingAndGlyphs" stroke="#000" stroke-width="0.2">サポート</tspan><tspan x="711.9" y="172.0" font-size="9.8" textLength="2.3" lengthAdjust="spacingAndGlyphs">:</tspan></text>
<text fill="#111"><tspan x="719.5" y="172.1" font-size="9.8" textLength="14.5" lengthAdjust="spacingAndGlyphs" stroke="#111" stroke-width="0.2">なし</tspan></text>
<path d="M989.5 166.70000000000002 L993.2 170.1 L996.9000000000001 166.70000000000002" fill="none" stroke="#555" stroke-width="1.250"/>
<text fill="#000"><tspan x="683.5" y="191.1" font-size="9.8" textLength="33.7" lengthAdjust="spacingAndGlyphs" stroke="#000" stroke-width="0.2">インフィル</tspan><tspan x="717.2" y="190.8" font-size="9.8" textLength="2.3" lengthAdjust="spacingAndGlyphs">:</tspan></text>
<text fill="#111"><tspan x="727.8" y="190.8" font-size="9.8" textLength="17.6" lengthAdjust="spacingAndGlyphs">15%</tspan></text>
<path d="M775.5999999999999 185.70000000000002 L779.3 189.1 L783.0 185.70000000000002" fill="none" stroke="#555" stroke-width="1.250"/>
<text fill="#000"><tspan x="799.7" y="191.1" font-size="9.8" textLength="20.0" lengthAdjust="spacingAndGlyphs" stroke="#000" stroke-width="0.2">ブリム</tspan><tspan x="819.7" y="190.8" font-size="9.8" textLength="2.3" lengthAdjust="spacingAndGlyphs">:</tspan></text>
<rect x="685.5" y="445" width="52" height="10" fill="#fff"/>
<text fill="#000" font-weight="bold"><tspan x="687.4" y="454.0" font-size="9.8" textLength="29.6" lengthAdjust="spacingAndGlyphs">スライス</tspan><tspan x="717.0" y="453.6" font-size="9.4" textLength="18.4" lengthAdjust="spacingAndGlyphs">情報</tspan></text>
<text fill="#111"><tspan x="686.0" y="468.7" font-size="9.4" textLength="18.4" lengthAdjust="spacingAndGlyphs" stroke="#111" stroke-width="0.08">使用</tspan><tspan x="704.4" y="469.1" font-size="9.8" textLength="41.1" lengthAdjust="spacingAndGlyphs" stroke="#111" stroke-width="0.2">フィラメント</tspan><tspan x="745.5" y="468.8" font-size="9.8" textLength="10.1" lengthAdjust="spacingAndGlyphs">(g)</tspan></text>
<text fill="#111"><tspan x="780.8" y="468.8" font-size="9.8" textLength="17.2" lengthAdjust="spacingAndGlyphs">7.12</tspan></text>
<text fill="#111"><tspan x="686.0" y="485.4" font-size="9.4" textLength="18.4" lengthAdjust="spacingAndGlyphs" stroke="#111" stroke-width="0.08">使用</tspan><tspan x="704.4" y="485.8" font-size="9.8" textLength="40.9" lengthAdjust="spacingAndGlyphs" stroke="#111" stroke-width="0.2">フィラメント</tspan><tspan x="745.3" y="485.5" font-size="9.8" textLength="12.4" lengthAdjust="spacingAndGlyphs">(m)</tspan></text>
<text fill="#111"><tspan x="780.8" y="485.5" font-size="9.8" textLength="17.2" lengthAdjust="spacingAndGlyphs">2.47</tspan></text>
<text fill="#111"><tspan x="686.0" y="502.3" font-size="9.4" textLength="18.4" lengthAdjust="spacingAndGlyphs" stroke="#111" stroke-width="0.08">使用</tspan><tspan x="704.4" y="502.7" font-size="9.8" textLength="43.6" lengthAdjust="spacingAndGlyphs" stroke="#111" stroke-width="0.2">フィラメント</tspan><tspan x="748.0" y="502.4" font-size="9.8" textLength="24.4" lengthAdjust="spacingAndGlyphs"> (mm³)</tspan></text>
<text fill="#111"><tspan x="780.8" y="502.4" font-size="9.8" textLength="33.6" lengthAdjust="spacingAndGlyphs">5933.33</tspan></text>
<text fill="#111"><tspan x="686.0" y="518.0" font-size="9.4" textLength="18.4" lengthAdjust="spacingAndGlyphs" stroke="#111" stroke-width="0.08">予測</tspan><tspan x="704.4" y="518.4" font-size="9.8" textLength="28.1" lengthAdjust="spacingAndGlyphs" stroke="#111" stroke-width="0.2">プリント</tspan><tspan x="732.5" y="518.0" font-size="9.4" textLength="18.4" lengthAdjust="spacingAndGlyphs" stroke="#111" stroke-width="0.08">時間</tspan><tspan x="750.9" y="518.1" font-size="9.8" textLength="2.3" lengthAdjust="spacingAndGlyphs">:</tspan></text>
<text fill="#111"><tspan x="694.0" y="531.9" font-size="9.8" textLength="5.1" lengthAdjust="spacingAndGlyphs">- </tspan><tspan x="699.1" y="531.8" font-size="9.4" textLength="18.4" lengthAdjust="spacingAndGlyphs" stroke="#111" stroke-width="0.08">通常</tspan><tspan x="717.5" y="532.2" font-size="9.8" textLength="22.3" lengthAdjust="spacingAndGlyphs" stroke="#111" stroke-width="0.2">モード</tspan></text>
<text fill="#111"><tspan x="780.8" y="531.9" font-size="9.8" textLength="29.5" lengthAdjust="spacingAndGlyphs">1h22m</tspan></text>
<text fill="#111" font-weight="bold"><tspan x="762.3" y="556.5" font-size="9.8" textLength="6.4" lengthAdjust="spacingAndGlyphs">G</tspan><tspan x="768.7" y="556.8" font-size="9.8" textLength="72.5" lengthAdjust="spacingAndGlyphs">コードのエクスポート</tspan></text>
<text fill="#111" font-weight="bold"><tspan x="950.4" y="556.8" font-size="9.8" textLength="43.1" lengthAdjust="spacingAndGlyphs">プリンターに</tspan><tspan x="993.5" y="556.4" font-size="9.4" textLength="18.4" lengthAdjust="spacingAndGlyphs">送信</tspan></text>
<g fill="none" stroke="#4479fb" stroke-width="1"><path d="M938.5 546.2h-8.3a1 1 0 0 0 -1 1v10.4a1 1 0 0 0 1 1h10.6a1 1 0 0 0 1-1v-7.6"/><path d="M939 547.5h4.4M941.6 545.6l1.9 1.9-1.9 1.9" stroke-width=".8"/></g>
<text x="931.6" y="556.4" font-size="8.6" fill="#4479fb" font-weight="bold">G</text>
<text x="600.0" y="64.0" font-size="9.6" fill="#aaaaaa" textLength="22.6" lengthAdjust="spacingAndGlyphs">56.24</text>
<text x="600.0" y="77.2" font-size="9.6" fill="#aaaaaa" textLength="21.2" lengthAdjust="spacingAndGlyphs">(468)</text>
<path d="M634.4 65.2V547" stroke="#4479fb" stroke-width="1.7"/><polygon points="634.4,61.4 638.9,65.6 629.9,65.6" fill="#4479fb"/><polygon points="629.6,546.6 639,546.6 634.3,551" fill="#4479fb"/>
<path d="M629.2 66.4V545M639.7 66.4V545" stroke="#b5b5b5" stroke-width=".8" stroke-dasharray="1 .9" fill="none"/>
<text x="645.9" y="71.5" font-size="9.6" fill="#aaaaaa" textLength="23.1" lengthAdjust="spacingAndGlyphs">56.00</text>
<text x="645.9" y="88.9" font-size="9.6" fill="#aaaaaa" textLength="23.1" lengthAdjust="spacingAndGlyphs">53.96</text>
<text x="645.9" y="106.3" font-size="9.6" fill="#aaaaaa" textLength="23.1" lengthAdjust="spacingAndGlyphs">51.92</text>
<text x="645.9" y="122.7" font-size="9.6" fill="#aaaaaa" textLength="23.1" lengthAdjust="spacingAndGlyphs">50.00</text>
<text x="645.9" y="140.2" font-size="9.6" fill="#aaaaaa" textLength="23.1" lengthAdjust="spacingAndGlyphs">47.96</text>
<text x="645.9" y="157.6" font-size="9.6" fill="#aaaaaa" textLength="23.1" lengthAdjust="spacingAndGlyphs">45.92</text>
<text x="645.9" y="174.0" font-size="9.6" fill="#aaaaaa" textLength="23.1" lengthAdjust="spacingAndGlyphs">44.00</text>
<text x="645.9" y="191.5" font-size="9.6" fill="#aaaaaa" textLength="23.1" lengthAdjust="spacingAndGlyphs">41.96</text>
<text x="645.9" y="208.9" font-size="9.6" fill="#aaaaaa" textLength="23.1" lengthAdjust="spacingAndGlyphs">39.92</text>
<text x="645.9" y="225.3" font-size="9.6" fill="#aaaaaa" textLength="23.1" lengthAdjust="spacingAndGlyphs">38.00</text>
<text x="645.9" y="242.7" font-size="9.6" fill="#aaaaaa" textLength="23.1" lengthAdjust="spacingAndGlyphs">35.96</text>
<text x="645.9" y="260.2" font-size="9.6" fill="#aaaaaa" textLength="23.1" lengthAdjust="spacingAndGlyphs">33.92</text>
<text x="645.9" y="276.6" font-size="9.6" fill="#aaaaaa" textLength="23.1" lengthAdjust="spacingAndGlyphs">32.00</text>
<text x="645.9" y="294.0" font-size="9.6" fill="#aaaaaa" textLength="23.1" lengthAdjust="spacingAndGlyphs">29.96</text>
<text x="645.9" y="311.5" font-size="9.6" fill="#aaaaaa" textLength="23.1" lengthAdjust="spacingAndGlyphs">27.92</text>
<text x="645.9" y="327.9" font-size="9.6" fill="#aaaaaa" textLength="23.1" lengthAdjust="spacingAndGlyphs">26.00</text>
<text x="645.9" y="345.3" font-size="9.6" fill="#aaaaaa" textLength="23.1" lengthAdjust="spacingAndGlyphs">23.96</text>
<text x="645.9" y="362.7" font-size="9.6" fill="#aaaaaa" textLength="23.1" lengthAdjust="spacingAndGlyphs">21.92</text>
<text x="645.9" y="379.1" font-size="9.6" fill="#aaaaaa" textLength="23.1" lengthAdjust="spacingAndGlyphs">20.00</text>
<text x="645.9" y="396.6" font-size="9.6" fill="#aaaaaa" textLength="23.1" lengthAdjust="spacingAndGlyphs">17.96</text>
<text x="645.9" y="414.0" font-size="9.6" fill="#aaaaaa" textLength="23.1" lengthAdjust="spacingAndGlyphs">15.92</text>
<text x="645.9" y="430.4" font-size="9.6" fill="#aaaaaa" textLength="23.1" lengthAdjust="spacingAndGlyphs">14.00</text>
<text x="645.9" y="447.9" font-size="9.6" fill="#aaaaaa" textLength="23.1" lengthAdjust="spacingAndGlyphs">11.96</text>
<text x="645.9" y="465.3" font-size="9.6" fill="#aaaaaa" textLength="17.7" lengthAdjust="spacingAndGlyphs">9.92</text>
<text x="645.9" y="481.7" font-size="9.6" fill="#aaaaaa" textLength="17.7" lengthAdjust="spacingAndGlyphs">8.00</text>
<text x="645.9" y="499.1" font-size="9.6" fill="#aaaaaa" textLength="17.7" lengthAdjust="spacingAndGlyphs">5.96</text>
<text x="645.9" y="516.6" font-size="9.6" fill="#aaaaaa" textLength="17.7" lengthAdjust="spacingAndGlyphs">3.92</text>
<text x="645.9" y="533.0" font-size="9.6" fill="#aaaaaa" textLength="17.7" lengthAdjust="spacingAndGlyphs">2.00</text>
<path d="M627.6 68.3h1.6M639.7 68.3h1.6M627.6 85.7h1.6M639.7 85.7h1.6M627.6 103.2h1.6M639.7 103.2h1.6M627.6 119.6h1.6M639.7 119.6h1.6M627.6 137.0h1.6M639.7 137.0h1.6M627.6 154.5h1.6M639.7 154.5h1.6M627.6 170.9h1.6M639.7 170.9h1.6M627.6 188.3h1.6M639.7 188.3h1.6M627.6 205.7h1.6M639.7 205.7h1.6M627.6 222.1h1.6M639.7 222.1h1.6M627.6 239.6h1.6M639.7 239.6h1.6M627.6 257.0h1.6M639.7 257.0h1.6M627.6 273.4h1.6M639.7 273.4h1.6M627.6 290.9h1.6M639.7 290.9h1.6M627.6 308.3h1.6M639.7 308.3h1.6M627.6 324.7h1.6M639.7 324.7h1.6M627.6 342.1h1.6M639.7 342.1h1.6M627.6 359.6h1.6M639.7 359.6h1.6M627.6 376.0h1.6M639.7 376.0h1.6M627.6 393.4h1.6M639.7 393.4h1.6M627.6 410.9h1.6M639.7 410.9h1.6M627.6 427.3h1.6M639.7 427.3h1.6M627.6 444.7h1.6M639.7 444.7h1.6M627.6 462.1h1.6M639.7 462.1h1.6M627.6 478.6h1.6M639.7 478.6h1.6M627.6 496.0h1.6M639.7 496.0h1.6M627.6 513.4h1.6M639.7 513.4h1.6M627.6 529.8h1.6M639.7 529.8h1.6" stroke="#b5b5b5" stroke-width=".8"/>
<text x="645.9" y="543.0" font-size="9.6" fill="#aaaaaa" textLength="17.7" lengthAdjust="spacingAndGlyphs">0.20</text>
<text x="645.9" y="556.7" font-size="9.6" fill="#aaaaaa" textLength="10.6" lengthAdjust="spacingAndGlyphs">(1)</text>
<rect x="630.8" y="559.6" width="7.4" height="5.6" rx=".6" fill="#4479fb"/><path d="M632.4 559.8v-1.8a2.1 2.1 0 0 1 4.2-.4" fill="none" stroke="#4479fb" stroke-width="1.1"/><rect x="633.9" y="561.2" width="1.2" height="2.4" fill="#fff"/>
<path d="M675.89 559.50L676.95 559.73L676.95 561.07L675.89 561.30L675.54 562.16L676.12 563.07L675.17 564.02L674.26 563.44L673.40 563.79L673.17 564.85L671.83 564.85L671.60 563.79L670.74 563.44L669.83 564.02L668.88 563.07L669.46 562.16L669.11 561.30L668.05 561.07L668.05 559.73L669.11 559.50L669.46 558.64L668.88 557.73L669.83 556.78L670.74 557.36L671.60 557.01L671.83 555.95L673.17 555.95L673.40 557.01L674.26 557.36L675.17 556.78L676.12 557.73L675.54 558.64Z" fill="#4479fb" fill-opacity=".18" stroke="#4479fb" stroke-width="1.0" stroke-linejoin="round"/><circle cx="672.5" cy="560.4" r="1.35" fill="#fff" stroke="#4479fb" stroke-width="0.90"/>
<path d="M13 546.75H582" stroke="#4479fb" stroke-width="2.1"/><polygon points="10,546.75 14.800,542.300 14.800,551.200" fill="#4479fb"/><polygon points="585.600,546.75 580.800,542.300 580.800,551.200" fill="#4479fb"/>
<text x="15.6" y="563.1" font-size="9.6" fill="#aaaaaa" textLength="31.1" lengthAdjust="spacingAndGlyphs">246474</text>
<text x="548.0" y="538.0" font-size="9.6" fill="#aaaaaa" textLength="32.0" lengthAdjust="spacingAndGlyphs">246478</text>
<path d="M3.400 95.400L1.300 98.300L3.400 101.200" stroke="#d7ecf5" stroke-width=".8" fill="none"/>
<path d="M13.500 306.900h9.200c2.600 0 2.600-3.700 0-3.700h-3.200c-2.600 0-2.600-3.700 0-3.700h5.600" fill="none" stroke="#a3a7b4" stroke-width="1"/>
<g fill="none" stroke="#5a7ed8" stroke-width="1"><path d="M12.800 305.200c-5-6.600 5-6.600 0 0z"/><path d="M24.100 296.600c-4.200-5.600 4.200-5.600 0 0z"/></g><circle cx="12.800" cy="301" r=".8" fill="#5a7ed8"/><circle cx="24.100" cy="293" r=".7" fill="#5a7ed8"/>
<path d="M32 294.500c2-2.500 6-1 8.500-1.800c3-.8 6.500 0 7.600 3c1 3-.6 5.400-1 7.600c-.6 2.600-3.600 2.600-6 2.600c-3 0-6.600 1.400-8.600-.6c-2-2-.8-4.600-.8-6.600c0-1.600-.6-3 .3-4.200z" fill="#fff"/>
<g fill="#4479fb"><rect x="37.200" y="295.600" width="1.300" height="5" rx=".6"/><rect x="38.700" y="294.300" width="1.300" height="6" rx=".6"/><rect x="40.200" y="294" width="1.300" height="6" rx=".6"/><rect x="41.700" y="294.800" width="1.300" height="6" rx=".6"/><path d="M37.200 299h5.800c.5 2.600 0 5-1.200 6.800h-3.200c-1-1.200-1.700-3.600-1.400-6.800z"/><path d="M37.600 301.500l-1.900-1.700c-.8-.6-1.500 .2-1 1l2.600 3.600z"/></g>
<g fill="none" stroke="#4479fb" stroke-width="1.1"><path d="M57.6 297l5.100-4.600l5.100 4.600M57.600 300.600l5.100-4.600l5.100 4.600M57.600 304.300l5.100-4.600l5.100 4.600"/></g><rect x="55.3" y="306" width="14.8" height="1.7" fill="#d236d2"/>
<g fill="none" stroke="#4479fb" stroke-width="1.1"><path d="M79.600 292.600l5.400 4.600l5.400-4.600M79.600 296.300l5.400 4.600l5.400-4.600M79.600 300l5.400 4.600l5.400-4.600"/></g><rect x="77.6" y="306" width="14.4" height="1.7" fill="#38b4d2"/>
<rect x="98.2" y="290.500" width="18.100" height="17.900" fill="none" stroke="#4479fb" stroke-width=".8"/>
<g fill="none" stroke="#f2f2f2" stroke-width="1.200"><rect x="-3.300" y="-1.800" width="6.600" height="3.600" rx="1.800" transform="translate(104.800 301.700) rotate(-45)"/><rect x="-3.300" y="-1.800" width="6.600" height="3.600" rx="1.800" transform="translate(109.800 296.700) rotate(-45)"/></g><path d="M106 298.300l2.600 2.600" stroke="#797b7d" stroke-width="1.700"/><g stroke="#f2f2f2" stroke-width=".7"><path d="M102.600 293.800l.9 1.500M101 295.700l1.500 .8M111.900 304.800l-.9-1.500M113.600 302.900l-1.500-.8"/></g><rect x="100.2" y="306" width="14.1" height="1.7" fill="#ededed"/>
<path d="M123.800 291.800h3v4.600h1.300l-2.800 3.300l-2.800-3.300h1.300z" fill="#f4f4f4"/><path d="M125.300 299.700c0 3 1.600 4 4 3.600" fill="none" stroke="#f4f4f4" stroke-width=".8"/>
<path d="M130.600 294.400h3.600v5h1.800l-3.600 4.400l-3.600-4.400h1.800z" fill="#4479fb"/><rect x="122.8" y="306" width="13.9" height="1.7" fill="#c9c84f"/>
<circle cx="151.600" cy="295.700" r="4" fill="#27a3f2"/><circle cx="148.800" cy="300.300" r="4" fill="#f03b7a"/><circle cx="154.900" cy="300.300" r="4" fill="#ffc832"/><circle cx="151.700" cy="298.700" r="1.600" fill="#3a3a50"/><rect x="144.5" y="306" width="14.3" height="1.7" fill="#e89282"/>
<path d="M169.600 292.800h8.600v1.300h-1.200c0 3-2.200 3.600-2.200 4.700s2.200 1.700 2.200 4.700h1.200v1.300h-8.600v-1.300h1.200c0-3 2.200-3.600 2.200-4.700s-2.200-1.700-2.200-4.700h-1.200z" fill="none" stroke="#f4f4f4" stroke-width=".9"/><path d="M172.300 302.800h3.200l-1.600-1.500z" fill="#5f8cf5"/><rect x="166.9" y="306" width="14.1" height="1.7" fill="#41d15f"/>
<path d="M198.77 296.68L199.85 296.91L199.85 298.29L198.77 298.52L198.40 299.40L199.00 300.33L198.03 301.30L197.10 300.70L196.22 301.07L195.99 302.15L194.61 302.15L194.38 301.07L193.50 300.70L192.57 301.30L191.60 300.33L192.20 299.40L191.83 298.52L190.75 298.29L190.75 296.91L191.83 296.68L192.20 295.80L191.60 294.87L192.57 293.90L193.50 294.50L194.38 294.13L194.61 293.05L195.99 293.05L196.22 294.13L197.10 294.50L198.03 293.90L199.00 294.87L198.40 295.80Z" fill="#4479fb" fill-opacity=".18" stroke="#4479fb" stroke-width="1.2" stroke-linejoin="round"/><circle cx="195.3" cy="297.6" r="1.38" fill="#fff" stroke="#4479fb" stroke-width="1.08"/>
<path d="M193.400 304.600l.9-2.900l6.600-6.600l2 2l-6.600 6.600z" fill="#f4f4f4" stroke="#797b7d" stroke-width=".5"/><rect x="189.3" y="306" width="13.7" height="1.7" fill="#e2c930"/>
<circle cx="218.600" cy="299.200" r="7.700" fill="#fff"/><path d="M218.600 291.500a7.700 7.700 0 0 1 7.700 7.700h-7.700zM218.600 306.900a7.700 7.700 0 0 1 -7.700-7.700h7.700z" fill="#000"/><circle cx="218.600" cy="299.200" r="7.700" fill="none" stroke="#000" stroke-width=".6"/>
<g fill="none" stroke="#f0f0f0" stroke-width=".8"><path d="M240.800 290.600l7.500 4.300v8.600l-7.500 4.300l-7.500-4.300v-8.600z"/><path d="M240.800 299.200v8.600M240.800 299.200l7.500-4.300M240.800 299.200l-7.500-4.300" /><path d="M240.800 290.600v8.600M240.800 299.200l7.500 4.300M240.800 299.200l-7.500 4.300" stroke-width=".45"/></g>
<rect x="254.200" y="290.500" width="18.100" height="17.900" fill="none" stroke="#4479fb" stroke-width=".8"/>
<path d="M259.300 291.200h7.400v11.600h1.500v2.200l-2.300 .3l-2.900 2.700l-2.900-2.700l-2.300-.3v-2.200h1.500z" fill="#fbfbfb"/>
<rect x="5" y="471" width="53.500" height="55" fill="#7f7f7f" opacity=".8"/>
<rect x="58.700" y="472.300" width="54" height="52.200" fill="#4a4a4a" stroke="#9a9a9a" stroke-width="1.200"/>
<g fill="none" stroke="#4479fb" stroke-width="2.300" stroke-linejoin="round"><path d="M33 476.600l21.500 8.400v25.500l-22.500 9.500l-21-10v-25.500z"/><path d="M11 485l21 8.500l22.500-8.500M32 493.500v26.500"/></g>
<g fill="#4479fb"><path d="M85.500 475l22.500 13.500l-22.500 13.500l-22.500-13.500z"/><path d="M63 498.300l3.800-2.300l18.700 11.200l18.700-11.200l3.800 2.300l-22.500 13.500z"/><path d="M63 508l3.800-2.300l18.700 11.200l18.700-11.200l3.800 2.300l-22.500 13.500z"/></g>
<polygon points="281.6,207.500 290,210.100 290,216.300 281.400,213.500" fill="#8a4c2c"/><path d="M277 219.300L290 220.800" stroke="#7a5040" stroke-width="1"/>
</svg>
</body></html>
